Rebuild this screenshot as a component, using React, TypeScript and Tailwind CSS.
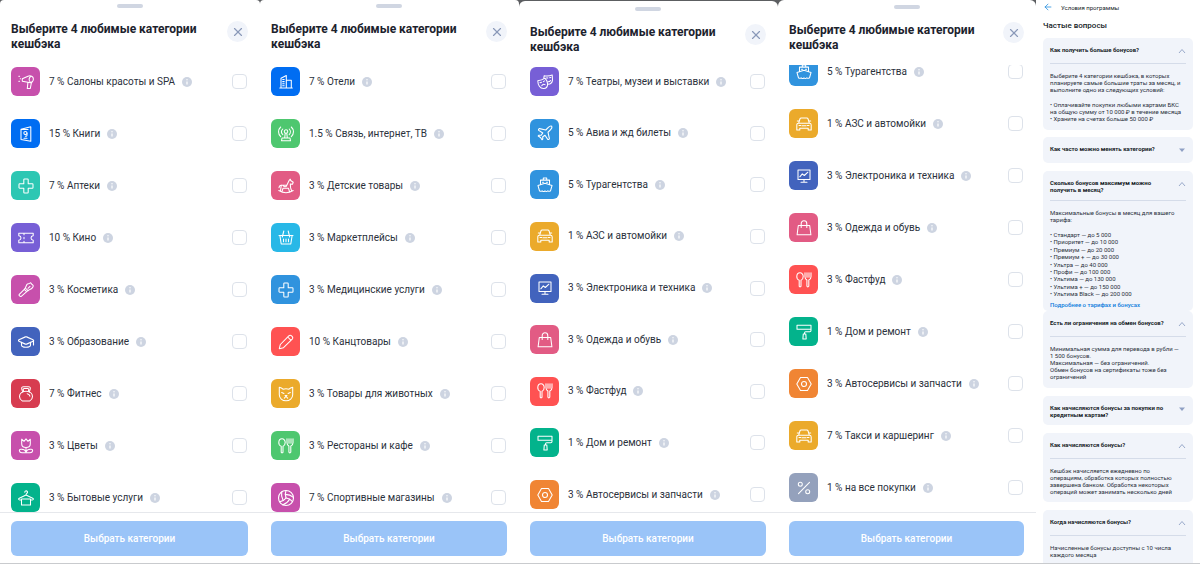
import { useId } from 'react';
import type { ReactNode } from 'react';
import { ArrowLeft, GraduationCap, Plane, Volleyball, X } from 'lucide-react';

type Category = { name: string; icon: ReactNode; color: string };

type Sheet = {
  id: string;
  sheet: string;
  list: string;
  header: string;
  items: Category[];
};

function Glyph({ children }: { children: ReactNode }) {
  return (
    <svg
      viewBox="0 0 16 16"
      className="size-4"
      fill="none"
      stroke="currentColor"
      strokeWidth="1.05"
      strokeLinecap="round"
      strokeLinejoin="round"
      aria-hidden="true"
    >
      {children}
    </svg>
  );
}

const cross = (
  <Glyph>
    <path d="M6.5 1h3c.4 0 .7.3.7.7v4.1h4.1c.4 0 .7.3.7.7v3c0 .4-.3.7-.7.7h-4.1v4.1c0 .4-.3.7-.7.7h-3a.7.7 0 0 1-.7-.7v-4.1H1.7a.7.7 0 0 1-.7-.7v-3c0-.4.3-.7.7-.7h4.1V1.7c0-.4.3-.7.7-.7z" />
  </Glyph>
);

const cutlery = (
  <Glyph>
    <path d="M3.2 8.2C1.4 7.6.7 6 .8 4.4.9 2.3 2.2.8 4 .8s3.2 1.5 3.2 3.6c0 1.6-.8 3.2-2.2 3.8v6a1 1 0 0 1-1.8 0z" />
    <path d="M9 .8v4c0 2 .8 2.8 1.9 3.3v6.1a1 1 0 0 0 1.9 0V8.1c1.3-.5 2.2-1.5 2.2-3.3v-4M11 .8v4.4M13 .8v4.4" />
  </Glyph>
);

const car = (
  <Glyph>
    <path d="M2.7 7.2 3.9 3c.2-.7.6-1 1.3-1h5.6c.7 0 1.1.3 1.3 1l1.2 4.2M3.2 5H1.3M12.8 5h1.9M2.5 7.2h11c1 0 1.7.7 1.7 1.7v5h-3v-1.7H3.8v1.7h-3v-5c0-1 .7-1.7 1.7-1.7zM3 9.5h1.7M11.3 9.5H13M6 9.8h4" />
  </Glyph>
);

const ship = (
  <Glyph>
    <path d="M6.3 3V1h3.4v2M3.5 7.2V3.1h9v4.1M5.5 5.2h1M9.5 5.2h1M8 6.3l7 2.3-1.5 5.2c-.9.7-1.8.7-2.7 0-.9.9-1.9.9-2.8 0-.9.9-1.9.9-2.8 0-.9.7-1.8.7-2.7 0L1 8.6z" />
  </Glyph>
);

const monitor = (
  <Glyph>
    <path d="M2 2h12v9.5H2zM8 11.5v2.7M5 14.3h6M3.8 8.8l2.5-3 2 1.7 3.6-3.3" />
  </Glyph>
);

const bag = (
  <Glyph>
    <path d="M2.3 5.5h11.4l1.2 9.3H1.1zM5.2 7.5V3.7C5.2 1.9 6.3.8 8 .8s2.8 1.1 2.8 2.9v3.8" />
  </Glyph>
);

const roller = (
  <Glyph>
    <path d="M1 1.3h14v4H1zM15 3.3v3.2c0 .8-.4 1.2-1.2 1.2H9.7c-.8 0-1.2.4-1.2 1.2v1M7.3 9.9h2.5l.4 5H6.9z" />
  </Glyph>
);

const nut = (
  <Glyph>
    <path d="M4.5 1.5h7L15.2 8l-3.7 6.5h-7L.8 8z" />
    <circle cx="8" cy="8" r="2.5" />
  </Glyph>
);

const travel: Category = { name: '5 % Турагентства', icon: ship, color: 'bg-[#3093de]' };
const fuel: Category = { name: '1 % АЗС и автомойки', icon: car, color: 'bg-[#ebaa2b]' };
const electronics: Category = { name: '3 % Электроника и техника', icon: monitor, color: 'bg-[#4263bd]' };
const clothes: Category = { name: '3 % Одежда и обувь', icon: bag, color: 'bg-[#e25b84]' };
const fastFood: Category = { name: '3 % Фастфуд', icon: cutlery, color: 'bg-[#ff5252]' };
const home: Category = { name: '1 % Дом и ремонт', icon: roller, color: 'bg-[#03b38c]' };
const autoService: Category = { name: '3 % Автосервисы и запчасти', icon: nut, color: 'bg-[#f08534]' };

const sheets: Sheet[] = [
  {
    id: 'beauty',
    sheet: 'rounded-t-[4px]',
    header: 'pt-1',
    list: 'justify-between pt-0.5',
    items: [
      {
        name: '7 % Салоны красоты и SPA',
        color: 'bg-[#c750ac]',
        icon: (
          <Glyph>
            <path d="M4.3 4.7 10 2.2c2.8-1 5.4.3 5.4 2.9 0 2.5-2 4-4.2 3.5L4.3 7.2zM13.2 2.2c-2.7 1-2.7 4.7-.5 6.2M9.9 8.5l-.6 6h3l1.2-6.4" />
            <path d="M.8 2.3h.8M2.2 4.7h.3M.8 7.2h.8" />
          </Glyph>
        ),
      },
      {
        name: '15 % Книги',
        color: 'bg-[#006df2]',
        icon: (
          <Glyph>
            <path d="M3 3.2 12.8.8v14.4L3 13.4zM3 3.2l7 .3" />
            <circle cx="7.4" cy="7" r="1.6" />
            <path d="M9 7v2c0 1-.8 1.5-1.7 1.3M6 12.200h3" />
          </Glyph>
        ),
      },
      { name: '7 % Аптеки', color: 'bg-[#2dc7b3]', icon: cross },
      {
        name: '10 % Кино',
        color: 'bg-[#775fd6]',
        icon: (
          <Glyph>
            <path d="M.8 3.2h14.4v2.6c-1.4.2-2.2 1-2.2 2.2s.8 2 2.2 2.2v2.6H.8v-2.6C2.2 10 3 9.2 3 8s-.8-2-2.2-2.2zM6 3.5v1.3M6 7.3v1.4M6 11.2v1.3" />
          </Glyph>
        ),
      },
      {
        name: '3 % Косметика',
        color: 'bg-[#c750ac]',
        icon: (
          <Glyph>
            <path d="M7.3 6 9 2.3c.8-.8 1.7-.4 2.5-.9l1.2-.7c.6 1 .8 1.5 1.8 2 .7.4.9 1.2.4 2.3-.6 1.3-1.6 2-3 2.4L10 8.7zM7.3 6 10 8.7l-1.3 1-2.4-2.4zM6.3 7.3l-5 5c-.8.9.9 2.9 2 2l5.4-4.6M10 6.3l2-2" />
          </Glyph>
        ),
      },
      { name: '3 % Образование', color: 'bg-[#4263bd]', icon: <GraduationCap className="size-[18px]" strokeWidth={1.5} /> },
      {
        name: '7 % Фитнес',
        color: 'bg-[#d73c50]',
        icon: (
          <Glyph>
            <path d="M4.8 6.3 3.8 3C3.3 1.5 4.2.7 5.5.7h5c1.3 0 2.2.8 1.7 2.3l-1 3.300M5.700 5.300 5.300 3.500c-.1-.7.2-1 .8-1h3.800c.6 0 .9.3.8 1l-.4 1.800M4.200 14.900c-1.700-1-2.700-2.600-2.700-4.400C1.500 7.200 4.300 5.200 8 5.200s6.500 2 6.500 5.300c0 1.800-1 3.400-2.700 4.400zM9.200 7.700c1.600.3 2.500 1.200 2.700 2.500" />
          </Glyph>
        ),
      },
      {
        name: '3 % Цветы',
        color: 'bg-[#c750ac]',
        icon: (
          <Glyph>
            <path d="M3.7 1.2v4.5c0 2.2 1.7 3.8 4.3 3.8s4.3-1.6 4.3-3.8V1.2L10 3.3 8 .8 6 3.3zM8 9.5v5.3M8 14c-.8-2-2.3-3-5-2.800-2.300-.2-2.300 3.600 1 3.600H12c3.300 0 3.300-3.800 1-3.600-2.700-.2-4.200.8-5 2.800" />
          </Glyph>
        ),
      },
      {
        name: '3 % Бытовые услуги',
        color: 'bg-[#03b38c]',
        icon: (
          <Glyph>
            <path d="M6.8 2.3c0-2 3-1.8 2.7.1C9.3 3.5 8 3.6 8 5M3.3 10H1.7c-1.3 0-1.4-1.300-.4-1.800L8 5l6.700 3.200c1 .5.9 1.800-.4 1.800h-1.600M3.500 9h9v6h-9z" />
          </Glyph>
        ),
      },
    ],
  },
  {
    id: 'hotels',
    sheet: 'rounded-t-[4px]',
    header: 'pt-1',
    list: 'justify-between pt-0.5',
    items: [
      {
        name: '7 % Отели',
        color: 'bg-[#006df2]',
        icon: (
          <Glyph>
            <path d="M3 14V4.2l5.300-2.700V14zM8.300 6.300h5V14h-5M1.800 14h12.500M4.700 5.500h1.500M4.700 7.600h1.500M4.700 9.700h1.500M4.700 11.800h1.500" />
          </Glyph>
        ),
      },
      {
        name: '1.5 % Связь, интернет, ТВ',
        color: 'bg-[#4ec76f]',
        icon: (
          <Glyph>
            <path d="M2.7 1C-.2 3.700-.2 8 2.700 10.700M13.300 1c2.900 2.700 2.900 7 0 9.700M4.800 3c-1.600 1.600-1.600 4 0 5.600M11.200 3c1.600 1.600 1.600 4 0 5.600M7.200 7.200 6.700 12h2.600l-.5-4.800M4 12h8l.5 2.800h-9z" />
            <circle cx="8" cy="5.5" r="1.7" />
          </Glyph>
        ),
      },
      {
        name: '3 % Детские товары',
        color: 'bg-[#e25b84]',
        icon: (
          <Glyph>
            <path d="M.8 12.500c4.500 2.800 9.900 2.800 14.400 0M4 13.500l1-3.200h5.500l1 3.200M2.500 12.700l.8-5.500h5.500L11 2.700l1.300-1.500.4 1.300 2.500 1.800-.7 1.900-2.200-.3.3 4 1 2.800M3.200 7.200c-1.500 0-2 .8-2.200 2.500M5.300 7.200c0 2 3.500 2 3.500 0" />
          </Glyph>
        ),
      },
      {
        name: '3 % Маркетплейсы',
        color: 'bg-[#28b8e7]',
        icon: (
          <Glyph>
            <path d="M1 5.500h14M1.900 5.700 3.200 14h9.600l1.300-8.300M5.800 1 4.300 7M10.200 1l1.500 6M5.500 9v2.700M8 9v2.700M10.500 9v2.700" />
          </Glyph>
        ),
      },
      { name: '3 % Медицинские услуги', color: 'bg-[#3093de]', icon: cross },
      {
        name: '10 % Канцтовары',
        color: 'bg-[#ff5252]',
        icon: (
          <Glyph>
            <path d="m1.300 14.700 1-4.200 8.500-8.700c1.900-1.700 5.100 1.400 3.400 3.400l-8.700 8.500zM9.700 3l3.300 3.300" />
          </Glyph>
        ),
      },
      {
        name: '3 % Товары для животных',
        color: 'bg-[#ebaa2b]',
        icon: (
          <Glyph>
            <path d="M1.300 1.200c1.500.3 2.800 1 3.700 2 2-.6 4-.6 6 0 .9-1 2.200-1.700 3.700-2v7.600c0 3.400-3 6-6.700 6s-6.700-2.600-6.700-6zM3.700 6.500l2.200 1M12.300 6.500l-2.200 1M7 9.500h2l-1 1zM8 10.500l-1.700 1.700M8 10.500l1.700 1.700" />
          </Glyph>
        ),
      },
      { name: '3 % Рестораны и кафе', color: 'bg-[#4ec76f]', icon: cutlery },
      { name: '7 % Спортивные магазины', color: 'bg-[#c750ac]', icon: <Volleyball className="size-[18px]" strokeWidth={1.5} /> },
    ],
  },
  {
    id: 'theatre',
    sheet: 'mt-px rounded-t-[6px]',
    header: 'pt-1.5',
    list: 'justify-between pt-px pb-[3px]',
    items: [
      {
        name: '7 % Театры, музеи и выставки',
        color: 'bg-[#775fd6]',
        icon: (
          <Glyph>
            <path d="M6.800 4.200 7.200 1.700c2.800.5 5.300.3 8-.7l.3 4.500c0 2.600-1.800 4.600-4.600 4.800M9.300 4l1.500-.1M12.600 3.700l1.300-.2M11.200 7.800c1.200 0 1.900-.4 2.300-1.300" />
            <path d="M.8 6.800c2.700-.2 5-1 7.200-2.600 1.300 1.500 2.500 3.600 2.600 5.500.1 2.900-1.800 4.700-4 4.800C3 14.600.8 10.800.8 6.800zM3 8.700l1.500-.4M6.300 7.600l1.300-.7M4.800 11.700c.3-1.200 2-1.900 3.200-1.100" />
          </Glyph>
        ),
      },
      { name: '5 % Авиа и жд билеты', color: 'bg-[#3093de]', icon: <Plane className="size-[18px]" strokeWidth={1.5} /> },
      travel,
      fuel,
      electronics,
      clothes,
      fastFood,
      home,
      autoService,
    ],
  },
  {
    id: 'other',
    sheet: 'rounded-t-[6px]',
    header: 'pt-[5px]',
    // scrolled to the end, so the first row is cut by the header
    list: 'justify-end gap-[23px] pb-2.5',
    items: [
      travel,
      fuel,
      electronics,
      clothes,
      fastFood,
      home,
      autoService,
      { name: '7 % Такси и каршеринг', color: 'bg-[#ebaa2b]', icon: car },
      {
        name: '1 % на все покупки',
        color: 'bg-[#94a1bc]',
        icon: (
          <Glyph>
            <circle cx="4.3" cy="4.3" r="2" />
            <circle cx="11.7" cy="11.7" r="2" />
            <path d="M13.500 2.300 2.500 13.700" />
          </Glyph>
        ),
      },
    ],
  },
];

const tariffs = [
  'Стандарт — до 5 000',
  'Приоритет — до 10 000',
  'Премиум — до 20 000',
  'Премиум + — до 30 000',
  'Ультра — до 40 000',
  'Профи — до 100 000',
  'Ультима — до 130 000',
  'Ультима + — до 150 000',
  'Ультима Black — до 200 000',
];

function CategoryRow({ name, icon, color }: Category) {
  const id = useId();
  return (
    <li className="flex shrink-0 items-center">
      <span className={`flex size-[29px] shrink-0 items-center justify-center rounded-md text-white ${color}`}>{icon}</span>
      <label htmlFor={id} className="ml-[9px] whitespace-nowrap text-[10px] leading-4 text-[#2b313c]">
        {name}
      </label>
      <button type="button" aria-label={`Подробнее: ${name}`} className="ml-[7px] shrink-0">
        <svg viewBox="0 0 10 10" className="size-2.5">
          <circle cx="5" cy="5" r="5" fill="#cdd4e1" />
          <path d="M5 4.500v3" stroke="#fff" strokeWidth="1.2" />
          <circle cx="5" cy="2.8" r=".7" fill="#fff" />
        </svg>
      </button>
      <input
        id={id}
        type="checkbox"
        className="mr-px ml-auto size-[15px] shrink-0 appearance-none rounded border border-[#dde2ea] bg-white checked:bg-[#9ac4f8]"
      />
    </li>
  );
}

function CategorySheet({ sheet, header, list, items }: Sheet) {
  return (
    <section className="flex min-h-0 min-w-0 flex-col bg-[#5c5e61]">
      <div className={`flex min-h-0 flex-1 flex-col bg-white ${sheet}`}>
        <header className={`h-[65px] shrink-0 pr-3 pl-[11px] ${header}`}>
          <div className="mx-auto h-1 w-[26px] rounded-full bg-[#d0d6e2]" />
          <div className="mt-[13px] flex items-start justify-between">
            <h2 className="mt-px text-[12px] leading-[15px] font-bold whitespace-nowrap text-[#1c222d]">
              Выберите 4 любимые категории
              <br />
              кешбэка
            </h2>
            <button
              type="button"
              aria-label="Закрыть"
              className="flex size-[21px] shrink-0 items-center justify-center rounded-full bg-[#f1f4fa] text-[#8a99b8]"
            >
              <X className="size-3.5" strokeWidth={2} />
            </button>
          </div>
        </header>
        <ul className={`flex min-h-0 flex-1 flex-col overflow-hidden pr-3 pl-[11px] ${list}`}>
          {items.map((item) => (
            <CategoryRow key={item.name} {...item} />
          ))}
        </ul>
        <footer className="border-t border-[#e6e8ec] pt-2 pr-3 pb-[7px] pl-[11px]">
          <button type="button" className="h-[35px] w-full rounded-md bg-[#9ac4f8] text-[10px] font-medium text-white">
            Выбрать категории
          </button>
        </footer>
      </div>
    </section>
  );
}

function Question({ title, children, className = '' }: { title: ReactNode; children?: ReactNode; className?: string }) {
  return (
    <article className={`rounded-[5px] bg-[#f1f4fa] px-[7px] text-[#2b313c] ${className}`}>
      <button type="button" aria-expanded={Boolean(children)} className="flex min-h-[25px] w-full items-start justify-between pt-2 pb-[7px] text-left">
        <span className="font-bold whitespace-nowrap text-[#161c27]">{title}</span>
        {children ? (
          <svg viewBox="0 0 8 6" className="mt-0.5 h-1.5 w-2 shrink-0" fill="none" stroke="#8fa0c4" strokeWidth=".9">
            <path d="m1 5 3-3.500L7 5" />
          </svg>
        ) : (
          <svg viewBox="0 0 8 6" className="mt-0.5 h-1.5 w-2 shrink-0" fill="#8fa0c4">
            <path d="M1 1.500h6L4 5z" />
          </svg>
        )}
      </button>
      {children && <div className="border-t border-[#d5dce9] pt-2 whitespace-nowrap">{children}</div>}
    </article>
  );
}

function Faq() {
  return (
    <section className="min-h-0 min-w-0 overflow-hidden bg-white px-[7px] text-[6px] leading-[7px] text-[#2b313c]">
      <header className="flex h-[14px] items-center gap-2 text-[#161c27]">
        <a href="#back" aria-label="Назад" className="text-[#2f93e0]">
          <ArrowLeft className="size-2.5" strokeWidth={2} />
        </a>
        <span>Условия программы</span>
      </header>
      <h2 className="pt-2 pb-2 text-[8px] leading-2 font-medium text-[#161c27]">Частые вопросы</h2>
      <Question title="Как получить больше бонусов?" className="h-[92px]">
        <p>Выберите 4 категории кешбэка, в которых</p>
        <p>планируете самые большие траты за месяц, и</p>
        <p>выполните одно из следующих условий:</p>
        <ul className="mt-2">
          <li>• Оплачивайте покупки любыми картами БКС</li>
          <li>на общую сумму от 10 000 ₽ в течение месяца</li>
          <li>• Храните на счетах больше 50 000 ₽</li>
        </ul>
      </Question>
      <Question title="Как часто можно менять категории?" className="mt-[7px] h-[26px]" />
      <Question
        title={
          <>
            Сколько бонусов максимум можно
            <br />
            получить в месяц?
          </>
        }
        className="mt-2 h-[140px]"
      >
        <p>Максимальные бонусы в месяц для вашего</p>
        <p>тарифа:</p>
        <ul className="mt-2 flex h-[66px] flex-col justify-between">
          {tariffs.map((tariff) => (
            <li key={tariff}>• {tariff}</li>
          ))}
        </ul>
        <a href="#tariffs" className="mt-1 block font-medium text-[#0b7bdc]">
          Подробнее о тарифах и бонусах
        </a>
      </Question>
      <Question title="Есть ли ограничения на обмен бонусов?" className="h-[77px]">
        <p>Минимальная сумма для перевода в рубли —</p>
        <p>1 500 бонусов.</p>
        <p>Максимальная — без ограничений.</p>
        <p>Обмен бонусов на сертификаты тоже без</p>
        <p>ограничений</p>
      </Question>
      <Question
        title={
          <>
            Как начисляются бонусы за покупки по
            <br />
            кредитным картам?
          </>
        }
        className="mt-2 h-[29px]"
      />
      <Question title="Как начисляются бонусы?" className="mt-2 h-[69px]">
        <p>Кешбэк начисляется ежедневно по</p>
        <p>операциям, обработка которых полностью</p>
        <p>завершена банком. Обработка некоторых</p>
        <p>операций может занимать несколько дней</p>
      </Question>
      <Question title="Когда начисляются бонусы?" className="mt-2 h-[60px]">
        <p>Начисленные бонусы доступны с 10 числа</p>
        <p>каждого месяца</p>
      </Question>
    </section>
  );
}

export default function App() {
  return (
    <main className="grid h-screen grid-cols-[260fr_259fr_259fr_258fr_164fr] grid-rows-[minmax(0,1fr)] overflow-hidden border-b border-[#c9cbce] bg-white font-['Roboto','Liberation_Sans',sans-serif]">
      {sheets.map((sheet) => (
        <CategorySheet key={sheet.id} {...sheet} />
      ))}
      <Faq />
    </main>
  );
}
